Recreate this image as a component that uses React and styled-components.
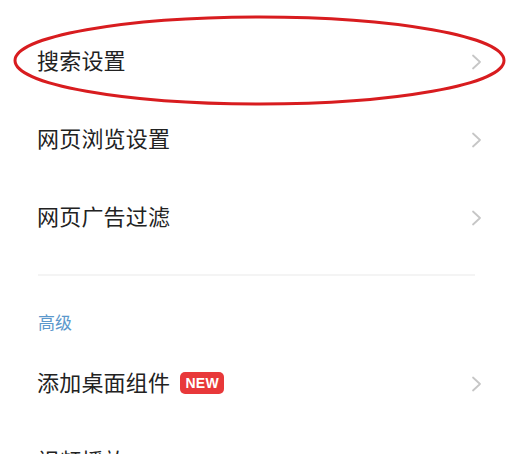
import React from "react";
import styled, { createGlobalStyle } from "styled-components";

const Global = createGlobalStyle`
  html, body { margin: 0; padding: 0; background: #ffffff; }
  body { font-family: "Noto Sans CJK SC", "Noto Sans", sans-serif; }
`;

const Page = styled.div`
  position: relative;
  width: 527px;
  height: 454px;
  overflow: hidden;
  background: #ffffff;
  padding-top: 20px;
  box-sizing: border-box;
`;

const Row = styled.div`
  display: flex;
  align-items: center;
  height: 78px;
  padding: 0 45px 0 37px;
  box-sizing: border-box;
`;

const Label = styled.span`
  font-size: 22px;
  line-height: 26px;
  color: #222222;
  letter-spacing: 0.2px;
`;

const Badge = styled.span`
  display: inline-flex;
  align-items: center;
  justify-content: center;
  margin-left: 10px;
  margin-top: 4px;
  width: 44px;
  height: 22px;
  border-radius: 5px;
  background: #e8383a;
  color: #ffffff;
  font-family: "Liberation Sans", Arial, sans-serif;
  font-weight: bold;
  font-size: 14px;
  letter-spacing: 0.3px;
`;

const Spacer = styled.div`
  flex: 1;
`;

const Chevron = styled.svg`
  width: 11px;
  height: 16px;
  flex: none;
  margin-top: 6px;
`;

const Divider = styled.div`
  margin: 20px 52px 0 38px;
  height: 2px;
  background: #f4f4f4;
`;

const SectionTitle = styled.div`
  padding: 36px 0 10px 38px;
  font-size: 17px;
  line-height: 20px;
  color: #5b98cc;
`;

const Annotation = styled.svg`
  position: absolute;
  left: 0;
  top: 0;
  pointer-events: none;
`;

const Arrow = () => (
  <Chevron viewBox="0 0 11 16">
    <path d="M2 1.5 L9 8 L2 14.5" fill="none" stroke="#c6c6c6" strokeWidth="1.8" strokeLinecap="round" strokeLinejoin="round" />
  </Chevron>
);

const Item = ({ label, badge }) => (
  <Row>
    <Label>{label}</Label>
    {badge && <Badge>{badge}</Badge>}
    <Spacer />
    <Arrow />
  </Row>
);

export default function App() {
  return (
    <>
      <Global />
      <Page>
        <Item label="搜索设置" />
        <Item label="网页浏览设置" />
        <Item label="网页广告过滤" />
        <Divider />
        <SectionTitle>高级</SectionTitle>
        <Item label="添加桌面组件" badge="NEW" />
        <Item label="视频播放" />
        <Annotation width="527" height="454" viewBox="0 0 527 454">
          <ellipse cx="259.5" cy="60.5" rx="244.5" ry="43.5" fill="none" stroke="#d81c1f" strokeWidth="3" />
        </Annotation>
      </Page>
    </>
  );
}
